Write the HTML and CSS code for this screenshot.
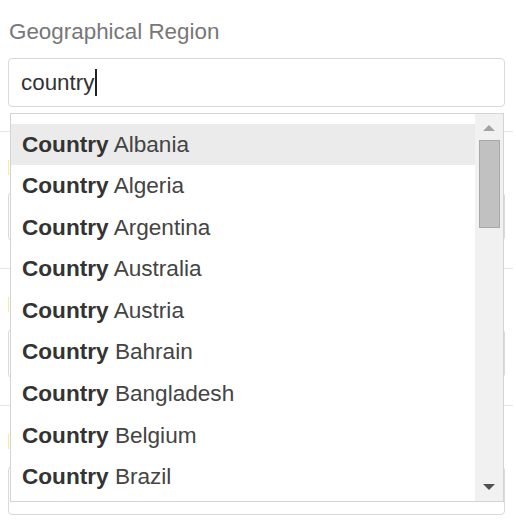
FILE: index.html
```html
<!DOCTYPE html>
<html>
<head>
<meta charset="utf-8">
<link rel="stylesheet" href="styles.css">
</head>
<body>
<div class="form">
  <div class="group first">
    <div class="label">Geographical Region</div>
    <div class="input"><span class="value">country</span><span class="caret"></span></div>
  </div>
  <hr class="sep">
  <div class="group">
    <div class="marker"></div>
    <div class="input"></div>
  </div>
  <hr class="sep">
  <div class="group">
    <div class="marker"></div>
    <div class="input"></div>
  </div>
  <hr class="sep">
  <div class="group">
    <div class="marker"></div>
    <div class="input"></div>
  </div>

  <div class="dropdown">
    <ul class="list">
      <li class="item active"><b>Country</b> Albania</li>
      <li class="item"><b>Country</b> Algeria</li>
      <li class="item"><b>Country</b> Argentina</li>
      <li class="item"><b>Country</b> Australia</li>
      <li class="item"><b>Country</b> Austria</li>
      <li class="item"><b>Country</b> Bahrain</li>
      <li class="item"><b>Country</b> Bangladesh</li>
      <li class="item"><b>Country</b> Belgium</li>
      <li class="item"><b>Country</b> Brazil</li>
    </ul>
    <div class="scrollbar">
      <div class="arrow up"></div>
      <div class="track"><div class="thumb"></div></div>
      <div class="arrow down"></div>
    </div>
  </div>
</div>
</body>
</html>
```
FILE: styles.css
```css
html, body {
  margin: 0;
  padding: 0;
  background: #fff;
}
body {
  font-family: "Liberation Sans", Arial, sans-serif;
  overflow: hidden;
  height: 527px;
}
.form {
  position: relative;
  margin-left: 8px;
  width: 497px;
}
.group {
  display: flex;
  flex-direction: column;
}
.group.first {
  padding-top: 18px;
}
.label {
  font-size: 22.4px;
  line-height: 28px;
  color: #777;
  padding-left: 1px;
  height: 28px;
  margin-bottom: 12px;
}
.marker {
  width: 1px;
  height: 15px;
  margin-top: 28px;
  margin-bottom: 17px;
  background: #f7ec9e;
}
.input {
  box-sizing: border-box;
  height: 49px;
  border: 1px solid #d9d9d9;
  border-radius: 4px;
  display: flex;
  align-items: center;
  padding-left: 12px;
  font-size: 22.4px;
  color: #333;
}
.caret {
  display: inline-block;
  width: 1.5px;
  height: 27px;
  background: #222;
  margin-left: 1px;
}
.sep {
  border: 0;
  border-top: 1px solid #e6e6e6;
  margin: 27px -8px 0;
  height: 0;
}
.group.first + .sep {
  margin-top: 24px;
}
.dropdown {
  position: absolute;
  top: 113px;
  left: 2px;
  width: 494px;
  height: 389px;
  box-sizing: border-box;
  border: 1px solid #d4d4d4;
  background: #fff;
  display: flex;
  overflow: hidden;
}
.list {
  list-style: none;
  margin: 0;
  padding: 9.5px 0 0;
  flex: 1;
  overflow: hidden;
}
.item {
  height: 41.6px;
  line-height: 42px;
  padding-left: 11px;
  font-size: 22.6px;
  color: #444;
  white-space: nowrap;
}
.item b {
  color: #333;
  font-weight: bold;
}
.item.active {
  background: #ebebeb;
}
.scrollbar {
  width: 28px;
  background: #f1f1f1;
  display: flex;
  flex-direction: column;
  align-items: center;
}
.arrow {
  width: 0;
  height: 0;
  border-left: 6px solid transparent;
  border-right: 6px solid transparent;
}
.arrow.up {
  border-bottom: 6px solid #a3a3a3;
  margin-top: 11px;
}
.arrow.down {
  border-top: 6px solid #505050;
  margin-bottom: 11px;
}
.track {
  flex: 1;
  width: 100%;
  display: flex;
  justify-content: center;
  padding-top: 9px;
}
.thumb {
  box-sizing: border-box;
  width: 21px;
  height: 88px;
  background: #c1c1c1;
  border: 1px solid #a8a8a8;
}
```
